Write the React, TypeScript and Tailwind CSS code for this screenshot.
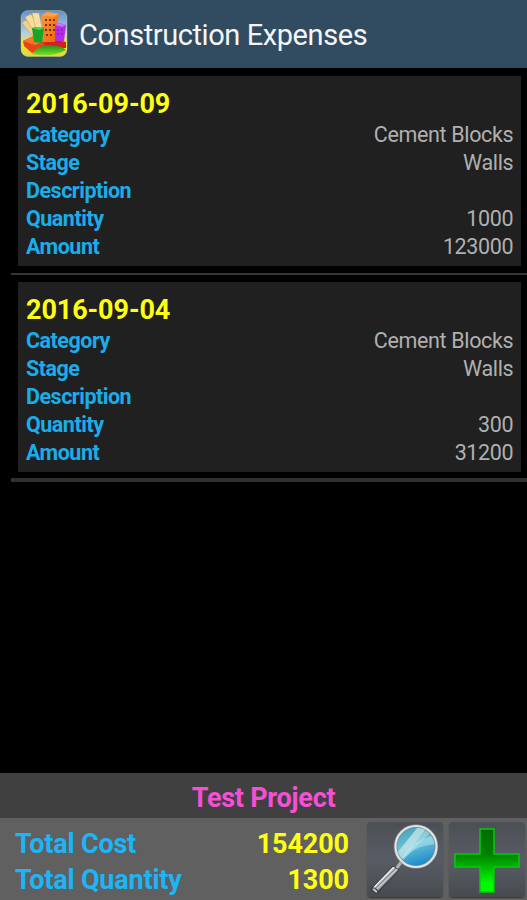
type Expense = {
  date: string;
  category: string;
  stage: string;
  description: string;
  quantity: number;
  amount: number;
};

const expenses: Expense[] = [
  { date: "2016-09-09", category: "Cement Blocks", stage: "Walls", description: "", quantity: 1000, amount: 123000 },
  { date: "2016-09-04", category: "Cement Blocks", stage: "Walls", description: "", quantity: 300, amount: 31200 },
];

function AppLogo() {
  return (
    <svg viewBox="0 0 48 48" className="h-12 w-12 shrink-0">
      <defs>
        <linearGradient id="sky" x1="0" y1="0" x2="0" y2="1">
          <stop offset="0" stopColor="#5b91d8" />
          <stop offset="0.5" stopColor="#b9cfe0" />
          <stop offset="0.68" stopColor="#f0e52c" />
          <stop offset="1" stopColor="#dcd93a" />
        </linearGradient>
        <linearGradient id="tower" x1="0" y1="0" x2="1" y2="1">
          <stop offset="0" stopColor="#ff9a2e" />
          <stop offset="1" stopColor="#e96210" />
        </linearGradient>
        <linearGradient id="lawn" x1="0" y1="0" x2="0" y2="1">
          <stop offset="0" stopColor="#1f8f16" />
          <stop offset="1" stopColor="#7fe02c" />
        </linearGradient>
        <clipPath id="tile">
          <rect x="1" y="0.5" width="46" height="46" rx="7" />
        </clipPath>
      </defs>
      <g clipPath="url(#tile)">
        <rect width="48" height="48" fill="url(#sky)" />
        {/* ground */}
        <path d="M3 31 L14 26 L30 32 L22 38 L12 43 L4 36 Z" fill="#e8431a" />
        <path d="M3 31 L13 26 L24 31 L15 35 Z" fill="#f47a22" />
        <path d="M23 33 Q35 28 46 32 L46 38 L28 38 Z" fill="#d3201c" />
        <path d="M12 44 Q19 34 30 35 Q43 36 46 40 Q32 48 12 44 Z" fill="url(#lawn)" />
        {/* bank notes */}
        <path d="M2 13 L6 10 L18 22 L12 25 Z" fill="#f2d18a" stroke="#c79a4c" strokeWidth="0.5" />
        <path d="M5 7 L11 4 L20 19 L14 22 Z" fill="#f8dc9a" stroke="#c79a4c" strokeWidth="0.5" />
        <path d="M12 3 L19 3 L22 18 L16 20 Z" fill="#f8dfa4" stroke="#c79a4c" strokeWidth="0.5" />
        {/* buildings */}
        <path d="M22 5 L27 2 L39 4 L35 32 L23 32 Z" fill="url(#tower)" />
        <path d="M22 5 L27 2 L39 4 L34 7 Z" fill="#ffa04f" />
        <path d="M25 10h2M29 10h2M33 10h2M25 15h2M29 15h2M33 15h2M25 20h2M29 20h2M33 20h2M26 25h2M30 25h2" stroke="#7d2c08" strokeWidth="2" />
        <path d="M12 18 L17 17 L24 18 L22 33 L14 32 Z" fill="#18a32a" />
        <path d="M12 18 L17 17 L24 18 L19 20 Z" fill="#5fcf50" />
        <path d="M35 15 L39 13 L46 15 L44 31 L35 31 Z" fill="#b52be8" />
        <path d="M35 15 L39 13 L46 15 L42 17 Z" fill="#d46ef5" />
        <path d="M37 20h1.600M41 20h1.600M37 24h1.600M41 24h1.600" stroke="#8a18b8" strokeWidth="1.6" />
      </g>
      <rect x="1" y="0.5" width="46" height="46" rx="7" fill="none" stroke="#d5dd83" strokeOpacity="0.35" />
    </svg>
  );
}

function SearchIcon() {
  return (
    <svg viewBox="0 0 76 76" className="h-[76px] w-[76px]">
      <defs>
        <linearGradient id="lens" x1="0.3" y1="0" x2="0.6" y2="1">
          <stop offset="0" stopColor="#45a3b5" />
          <stop offset="0.45" stopColor="#6bc0d6" />
          <stop offset="1" stopColor="#1689cd" />
        </linearGradient>
        <linearGradient id="handle" gradientUnits="userSpaceOnUse" x1="14" y1="54" x2="21" y2="61">
          <stop offset="0" stopColor="#45494c" />
          <stop offset="0.3" stopColor="#f4f5f5" />
          <stop offset="0.5" stopColor="#85898c" />
          <stop offset="0.65" stopColor="#d0d3d5" />
          <stop offset="1" stopColor="#25282b" />
        </linearGradient>
        <clipPath id="glass">
          <circle cx="49" cy="24.500" r="19.500" />
        </clipPath>
      </defs>
      <path d="M29 47 L35 39" stroke="#aeb3b6" strokeWidth="3" />
      <path d="M26 44 L32 48 L11 70 Q7 72 4 67 Z" fill="url(#handle)" stroke="#292c2f" strokeWidth="0.8" />
      <ellipse cx="8" cy="68.500" rx="3.600" ry="1.800" transform="rotate(40 8 68.500)" fill="#b9bdbf" stroke="#303336" />
      <circle cx="49" cy="24.500" r="19.500" fill="url(#lens)" />
      <g clipPath="url(#glass)">
        <path d="M35 40 Q40 19 69 13 L69 22 Q44 24 35 40 Z" fill="#a9e0ee" fillOpacity="0.6" />
        <path d="M30 31 L51 5 L59 7 L34 39 Z" fill="#d7f0ec" fillOpacity="0.65" />
        <path d="M60 7 L64 10 L37 37 L36 34 Z" fill="#c8ebe8" fillOpacity="0.45" />
      </g>
      <circle cx="49" cy="24.500" r="20.500" fill="none" stroke="#7d8489" strokeWidth="3.6" />
      <circle cx="49" cy="24.500" r="20.500" fill="none" stroke="#dfe3e5" strokeWidth="2.2" />
    </svg>
  );
}

function PlusIcon() {
  return (
    <svg viewBox="0 0 76 76" className="h-[76px] w-[76px]">
      <defs>
        <linearGradient id="plus" x1="0" y1="0" x2="0" y2="1">
          <stop offset="0" stopColor="#006b00" />
          <stop offset="0.4" stopColor="#008200" />
          <stop offset="0.6" stopColor="#00b400" />
          <stop offset="0.85" stopColor="#00fa00" />
        </linearGradient>
      </defs>
      <path d="M31 7H45V32H70V45H45V70H31V45H6V32H31Z" fill="url(#plus)" stroke="#0ac80e" strokeWidth="1.5" />
    </svg>
  );
}

function Row({ label, value }: { label: string; value: string | number }) {
  return (
    <div className="flex h-7 items-center justify-between text-[21.500px] leading-7">
      <span className="font-bold tracking-[-0.5px] text-[#1badea]">{label}</span>
      <span className="-mr-[0.3px] tracking-[-0.35px] text-[#b0b0b0]">{value}</span>
    </div>
  );
}

function ExpenseCard({ expense }: { expense: Expense }) {
  return (
    <div className="ml-[18px] mr-1.5 h-[190px] bg-[#202020] px-2 pt-[11px]">
      <h2 className="h-[34px] text-[27px] font-bold leading-[34px] tracking-[-0.1px] text-[#ffff14]">{expense.date}</h2>
      <Row label="Category" value={expense.category} />
      <Row label="Stage" value={expense.stage} />
      <Row label="Description" value={expense.description} />
      <Row label="Quantity" value={expense.quantity} />
      <Row label="Amount" value={expense.amount} />
    </div>
  );
}

export default function App() {
  const totalCost = expenses.reduce((sum, e) => sum + e.amount, 0);
  const totalQuantity = expenses.reduce((sum, e) => sum + e.quantity, 0);

  return (
    <div className="flex h-[900px] w-[527px] flex-col overflow-hidden bg-black font-[Roboto,sans-serif]">
      {/* Title bar */}
      <header className="flex h-[68px] shrink-0 items-center bg-[#314c61] pl-5">
        <AppLogo />
        <h1 className="ml-[11px] pt-1 text-[29px] tracking-[-0.42px] text-[#f3f5f6]">Construction Expenses</h1>
      </header>

      {/* Expense list */}
      <main className="flex-1 pt-2">
        <ExpenseCard expense={expenses[0]} />
        <div className="mt-[7px] mb-[7px] ml-[11px] h-0.5 bg-[#363636]" />
        <ExpenseCard expense={expenses[1]} />
        <div className="mt-1.5 ml-[11px] h-1 bg-[#303030]" />
      </main>

      {/* Totals */}
      <footer className="shrink-0">
        <div className="flex h-[45px] items-center justify-center bg-[#404040] pt-1.5 text-[27px] font-bold tracking-[-0.25px] text-[#f54fd5]">
          Test Project
        </div>
        <div className="flex h-[82px] bg-[#606060] pt-1">
          <div className="flex-1 pl-[15px] pr-[18px] pt-1 text-[27px] font-bold leading-9">
            <div className="flex justify-between">
              <span className="tracking-[-0.2px] text-[#1db5f5]">Total Cost</span>
              <span className="tracking-[-0.1px] text-[#ffff14]">{totalCost}</span>
            </div>
            <div className="flex justify-between">
              <span className="tracking-[-0.2px] text-[#1db5f5]">Total Quantity</span>
              <span className="tracking-[-0.1px] text-[#ffff14]">{totalQuantity}</span>
            </div>
          </div>
          <div className="flex gap-1.5 pr-0.5">
            <button aria-label="Search" className="h-[75px] w-[76px] rounded-sm bg-linear-to-b from-[#4b4f55] via-[#585d65] to-[#474b50] shadow-[0_1px_1px_#34373a]">
              <SearchIcon />
            </button>
            <button aria-label="Add" className="h-[75px] w-[76px] rounded-sm bg-linear-to-b from-[#4b4f55] via-[#585d65] to-[#474b50] shadow-[0_1px_1px_#34373a]">
              <PlusIcon />
            </button>
          </div>
        </div>
      </footer>
    </div>
  );
}
